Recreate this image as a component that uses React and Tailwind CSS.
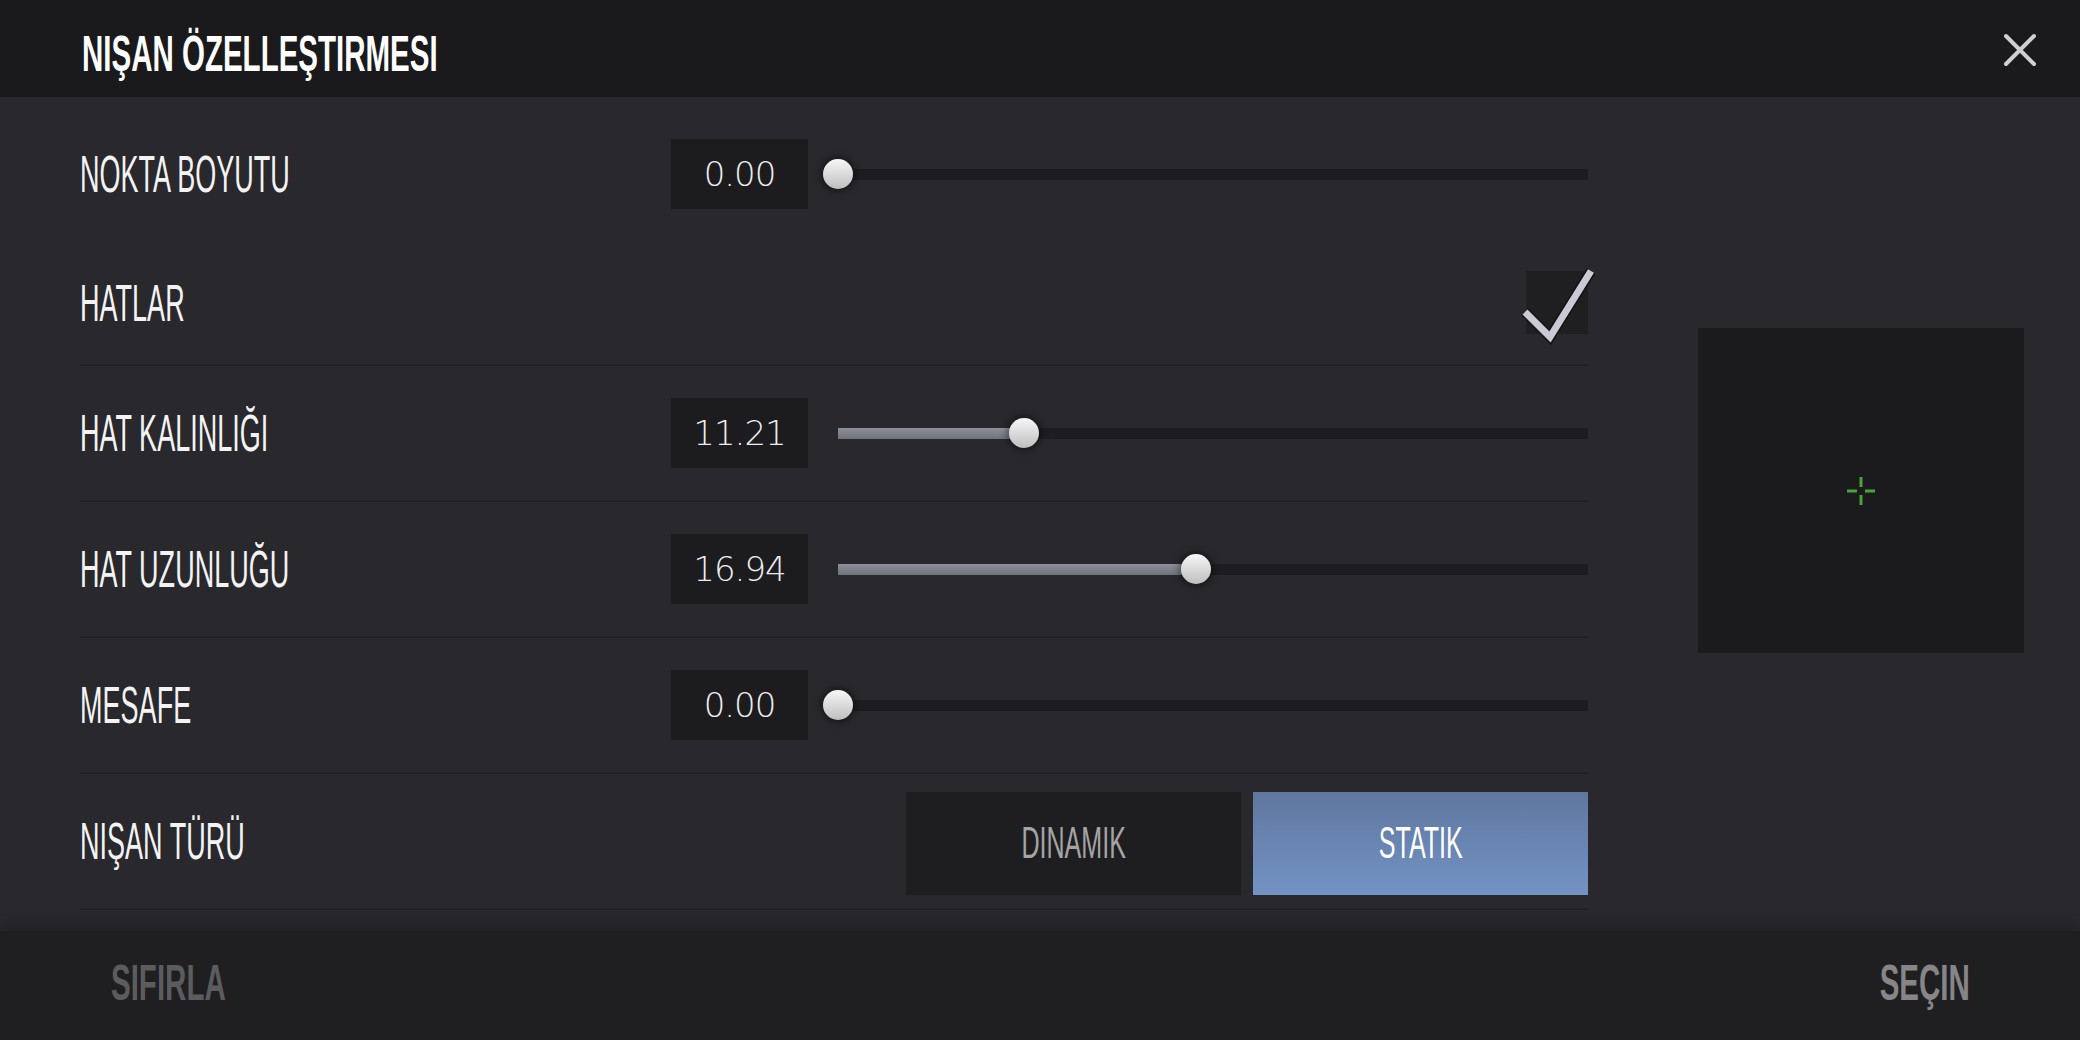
import React from "react";

function Cond({ children, scale = "label", className = "" }) {
  const cls =
    scale === "label"
      ? "scale-x-[0.52]"
      : scale === "bold"
      ? "scale-x-[0.59]"
      : "scale-x-[0.57]";
  return (
    <span className={`inline-block whitespace-nowrap ${cls} ${className}`}>
      {children}
    </span>
  );
}

function ValueBox({ value }) {
  return (
    <div className="w-[137px] h-[70px] bg-[#1c1c1f] flex items-center justify-center">
      <span className="font-['DejaVu_Sans',sans-serif] font-extralight text-[34px] leading-none text-[#ededed] tracking-[-1px]">
        {value}
      </span>
    </div>
  );
}

function Slider({ pct }) {
  return (
    <div className="relative ml-[30px] w-[750px] h-[30px] flex items-center">
      <div className="w-full h-[11px] bg-[#1d1d21]" />
      <div
        className="absolute left-0 top-[10px] h-[11px] bg-linear-to-b from-[#8d909b] to-[#6f727d]"
        style={{ width: `${pct}%` }}
      />
      <div
        className="absolute top-0 -translate-x-1/2 w-[30px] h-[30px] rounded-full bg-linear-to-b from-[#f7f7f7] to-[#bfbfbf] shadow-[0_0_6px_3px_rgba(0,0,0,0.35)]"
        style={{ left: `${pct}%` }}
      />
    </div>
  );
}

function Label({ children }) {
  return (
    <div className="flex-1 text-[52px] leading-none text-[#f3f3f3] font-['Liberation_Sans',sans-serif]">
      <Cond className="origin-left">{children}</Cond>
    </div>
  );
}

function SliderRow({ label, value, pct, className }) {
  return (
    <div className={`flex items-center ${className}`}>
      <Label>{label}</Label>
      <ValueBox value={value} />
      <Slider pct={pct} />
    </div>
  );
}

export default function App() {
  return (
    <div className="w-[2080px] h-[1040px] flex flex-col bg-[#28282d] overflow-hidden font-['Liberation_Sans',sans-serif]">
      {/* Header */}
      <div className="h-[97px] shrink-0 bg-[#1a1a1c] flex items-center justify-between pl-[82px] pr-[43px]">
        <div className="text-[50px] leading-none font-bold text-white mt-[10px]">
          <Cond scale="bold" className="origin-left">NIŞAN ÖZELLEŞTIRMESI</Cond>
        </div>
        <svg width="34" height="34" viewBox="0 0 34 34" className="mt-[3px]">
          <path d="M3 3 L31 31 M31 3 L3 31" stroke="#cfcfcf" strokeWidth="4" strokeLinecap="round" />
        </svg>
      </div>

      {/* Main */}
      <div className="flex-1 flex">
        <div className="w-[1588px] shrink-0 pl-[80px] pt-[9px] flex flex-col">
          <SliderRow label="NOKTA BOYUTU" value="0.00" pct={0} className="h-[136px]" />

          <div className="h-[124px] flex items-center border-b-2 border-[#222226]">
            <Label>HATLAR</Label>
            <div className="relative w-[62px] h-[63px] bg-[#1f1f22] mb-[2px]">
              <svg
                width="84"
                height="84"
                viewBox="0 0 84 84"
                className="absolute left-[-10px] top-[-10px] overflow-visible"
              >
                <polyline
                  points="9,51 34,76 75,10"
                  fill="none"
                  stroke="#141416"
                  strokeWidth="10"
                  strokeLinejoin="miter"
                />
                <polyline
                  points="9,51 34,76 75,10"
                  fill="none"
                  stroke="#cacad6"
                  strokeWidth="7"
                  strokeLinejoin="miter"
                />
              </svg>
            </div>
          </div>

          <SliderRow
            label="HAT KALINLIĞI"
            value="11.21"
            pct={24.8}
            className="h-[136px] border-b-2 border-[#222226]"
          />
          <SliderRow
            label="HAT UZUNLUĞU"
            value="16.94"
            pct={47.7}
            className="h-[136px] border-b-2 border-[#222226]"
          />
          <SliderRow
            label="MESAFE"
            value="0.00"
            pct={0}
            className="h-[136px] border-b-2 border-[#222226]"
          />

          <div className="h-[136px] flex items-center border-b-2 border-[#222226]">
            <Label>NIŞAN TÜRÜ</Label>
            <div className="flex gap-[12px] mt-[4px]">
              <div className="w-[335px] h-[103px] bg-[#1e1e20] flex items-center justify-center text-[44px] leading-none text-[#a4a4a6]">
                <Cond scale="btn" className="origin-center">DINAMIK</Cond>
              </div>
              <div className="w-[335px] h-[103px] bg-linear-to-b from-[#5f77a0] to-[#7393c4] flex items-center justify-center text-[44px] leading-none text-white">
                <Cond scale="btn" className="origin-center">STATIK</Cond>
              </div>
            </div>
          </div>
        </div>

        <div className="flex-1 pl-[110px] pt-[231px]">
          <div className="w-[326px] h-[325px] bg-[#1b1b1d] flex items-center justify-center">
            <svg width="30" height="30" viewBox="0 0 30 30">
              <path
                d="M1 15 H11 M19 15 H29 M15 1 V11 M15 19 V29"
                stroke="#46a536"
                strokeWidth="3"
              />
            </svg>
          </div>
        </div>
      </div>

      {/* Footer */}
      <div className="h-[109px] shrink-0 bg-[#1f1f21] shadow-[0_-6px_12px_rgba(0,0,0,0.18)] flex items-center justify-between pl-[111px] pr-[110px]">
        <div className="text-[50px] leading-none font-bold text-[#5c5c5f] mb-[6px]">
          <Cond scale="bold" className="origin-left">SIFIRLA</Cond>
        </div>
        <div className="text-[50px] leading-none font-bold text-[#868688] mb-[6px]">
          <Cond scale="bold" className="origin-right">SEÇIN</Cond>
        </div>
      </div>
    </div>
  );
}
